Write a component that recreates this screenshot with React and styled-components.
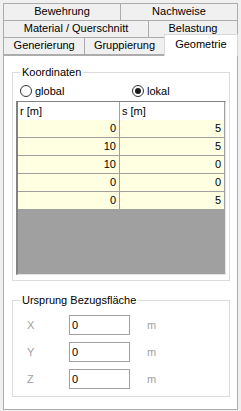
import React from 'react';
import styled, { createGlobalStyle } from 'styled-components';

const GlobalStyle = createGlobalStyle`
  html, body {
    margin: 0;
    padding: 0;
    background: #f0f0f0;
  }
  body {
    font-family: "Liberation Sans", Arial, sans-serif;
    font-size: 11px;
    color: #000;
  }
`;

const Window = styled.div`
  width: 241px;
  height: 411px;
  box-sizing: border-box;
  padding: 3px 3px 1px 3px;
  display: flex;
  flex-direction: column;
  background: #f0f0f0;
`;

const TabRow = styled.div`
  display: flex;
  height: 18px;
  margin-top: ${p => (p.$first ? 0 : -1)}px;
  position: relative;
  z-index: ${p => (p.$last ? 2 : 1)};
`;

const Tab = styled.div`
  box-sizing: border-box;
  width: ${p => p.$w}px;
  margin-left: ${p => (p.$first ? 0 : -1)}px;
  border: 1px solid #acacac;
  background: #f0f0f0;
  display: flex;
  align-items: center;
  justify-content: center;
  line-height: 13px;
  padding-bottom: 1px;
  white-space: nowrap;
`;

const ActiveTab = styled(Tab)`
  background: #fff;
  border-color: #d9d9d9;
  border-bottom: none;
  height: 22px;
  margin-top: -3px;
  margin-bottom: -1px;
  align-self: flex-start;
  align-items: flex-start;
  padding-top: 3px;
  position: relative;
  z-index: 3;
`;

const Panel = styled.div`
  flex: 1;
  background: #fff;
  border: 1px solid #acacac;
  padding: 16px 7px 0 8px;
  display: flex;
  flex-direction: column;
`;

const Group = styled.div`
  position: relative;
  border: 1px solid #dcdcdc;
  height: ${p => p.$h}px;
  box-sizing: border-box;
  margin-top: ${p => p.$mt || 0}px;
  padding: ${p => p.$pad};
  display: flex;
  flex-direction: column;
`;

const Legend = styled.span`
  position: absolute;
  top: -7px;
  left: 7px;
  padding: 0 2px;
  background: #fff;
  line-height: 13px;
`;

const RadioRow = styled.div`
  display: flex;
  align-items: center;
  height: 14px;
  padding-left: 4px;
  margin-bottom: 3px;
`;

const RadioOption = styled.label`
  display: flex;
  align-items: center;
  width: ${p => p.$w}px;
  gap: 3px;
`;

const RadioCircle = styled.span`
  box-sizing: border-box;
  width: 12px;
  height: 12px;
  border-radius: 50%;
  border: 1px solid #333;
  background: #fff;
  display: flex;
  align-items: center;
  justify-content: center;

  &::after {
    content: '';
    width: 6px;
    height: 6px;
    border-radius: 50%;
    background: ${p => (p.$checked ? '#1a1a1a' : 'transparent')};
  }
`;

const Grid = styled.div`
  flex: 1;
  background: #a0a0a0;
  border-top: 1px solid #828282;
  border-left: 2px solid #828282;
  border-right: 1px solid #e3e3e3;
  border-bottom: 1px solid #e3e3e3;
  display: grid;
  grid-template-columns: 102px 1fr;
  grid-auto-rows: 18px;
  align-content: start;
`;

const HeadCell = styled.div`
  height: 18px;
  background: #fff;
  border-right: 1px solid #a0a0a0;
  border-bottom: 1px solid #a0a0a0;
  padding-left: 2px;
  display: flex;
  align-items: center;
  line-height: 13px;
`;

const Cell = styled.div`
  background: #ffffe1;
  border-right: 1px solid #a0a0a0;
  border-bottom: 1px solid #a0a0a0;
  display: flex;
  align-items: center;
  justify-content: flex-end;
  padding-right: 3px;
  line-height: 13px;
`;

const FieldRow = styled.div`
  display: flex;
  align-items: center;
  height: 20px;
  margin-bottom: 7px;
`;

const AxisLabel = styled.span`
  width: 42px;
  color: #a0a0a0;
`;

const Input = styled.div`
  box-sizing: border-box;
  width: 61px;
  height: 20px;
  border: 1px solid #a0a0a0;
  padding-left: 2px;
  display: flex;
  align-items: center;
`;

const Unit = styled.span`
  margin-left: 17px;
  color: #a0a0a0;
`;

const rows = [
  [0, 5],
  [10, 5],
  [10, 0],
  [0, 0],
  [0, 5],
];

export default function App() {
  return (
    <>
      <GlobalStyle />
      <Window>
        <TabRow $first>
          <Tab $first $w={118}>Bewehrung</Tab>
          <Tab $w={118}>Nachweise</Tab>
        </TabRow>
        <TabRow>
          <Tab $first $w={146}>Material / Querschnitt</Tab>
          <Tab $w={90}>Belastung</Tab>
        </TabRow>
        <TabRow $last>
          <Tab $first $w={83}>Generierung</Tab>
          <Tab $w={81}>Gruppierung</Tab>
          <ActiveTab $w={75}>Geometrie</ActiveTab>
        </TabRow>
        <Panel>
          <Group $h={209} $pad="11px 3px 5px 3px">
            <Legend>Koordinaten</Legend>
            <RadioRow>
              <RadioOption $w={112}>
                <RadioCircle />
                global
              </RadioOption>
              <RadioOption>
                <RadioCircle $checked />
                lokal
              </RadioOption>
            </RadioRow>
            <Grid>
              <HeadCell>r [m]</HeadCell>
              <HeadCell>s [m]</HeadCell>
              {rows.map((r, i) => (
                <React.Fragment key={i}>
                  <Cell>{r[0]}</Cell>
                  <Cell>{r[1]}</Cell>
                </React.Fragment>
              ))}
            </Grid>
          </Group>
          <Group $h={97} $mt={19} $pad="14px 3px 0 14px">
            <Legend>Ursprung Bezugsfläche</Legend>
            {['X', 'Y', 'Z'].map(a => (
              <FieldRow key={a}>
                <AxisLabel>{a}</AxisLabel>
                <Input>0</Input>
                <Unit>m</Unit>
              </FieldRow>
            ))}
          </Group>
        </Panel>
      </Window>
    </>
  );
}
